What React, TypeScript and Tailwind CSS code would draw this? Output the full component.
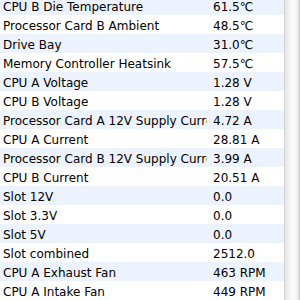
const rows: [string, string][] = [
  ['CPU B Die Temperature', '61.5℃'],
  ['Processor Card B Ambient', '48.5℃'],
  ['Drive Bay', '31.0℃'],
  ['Memory Controller Heatsink', '57.5℃'],
  ['CPU A Voltage', '1.28 V'],
  ['CPU B Voltage', '1.28 V'],
  ['Processor Card A 12V Supply Current', '4.72 A'],
  ['CPU A Current', '28.81 A'],
  ['Processor Card B 12V Supply Current', '3.99 A'],
  ['CPU B Current', '20.51 A'],
  ['Slot 12V', '0.0'],
  ['Slot 3.3V', '0.0'],
  ['Slot 5V', '0.0'],
  ['Slot combined', '2512.0'],
  ['CPU A Exhaust Fan', '463 RPM'],
  ['CPU A Intake Fan', '449 RPM'],
];

export default function App() {
  return (
    <div className="flex h-[300px] w-[300px] overflow-hidden bg-white font-[family-name:'DejaVu_Sans',sans-serif] text-[12px] text-black">
      <div className="-mt-[4px] flex w-[284px] flex-col">
        {rows.map(([label, value], i) => (
          <div
            key={label}
            className={`flex h-[19px] shrink-0 pt-[4px] leading-[15px] ${i % 2 === 0 ? 'bg-[#edf3fe]' : 'bg-white'}`}
          >
            <span className="w-[207px] shrink-0 overflow-hidden whitespace-nowrap pl-[3px]">{label}</span>
            <span className="pl-[6px] whitespace-nowrap">{value}</span>
          </div>
        ))}
      </div>
      <div className="h-full w-[16px] border-l border-[#d4d4d4] bg-[linear-gradient(to_right,#e4e4e4,#f6f6f6_35%,#fbfbfb_60%,#ececec_85%,#c6c6c6)]" />
    </div>
  );
}
